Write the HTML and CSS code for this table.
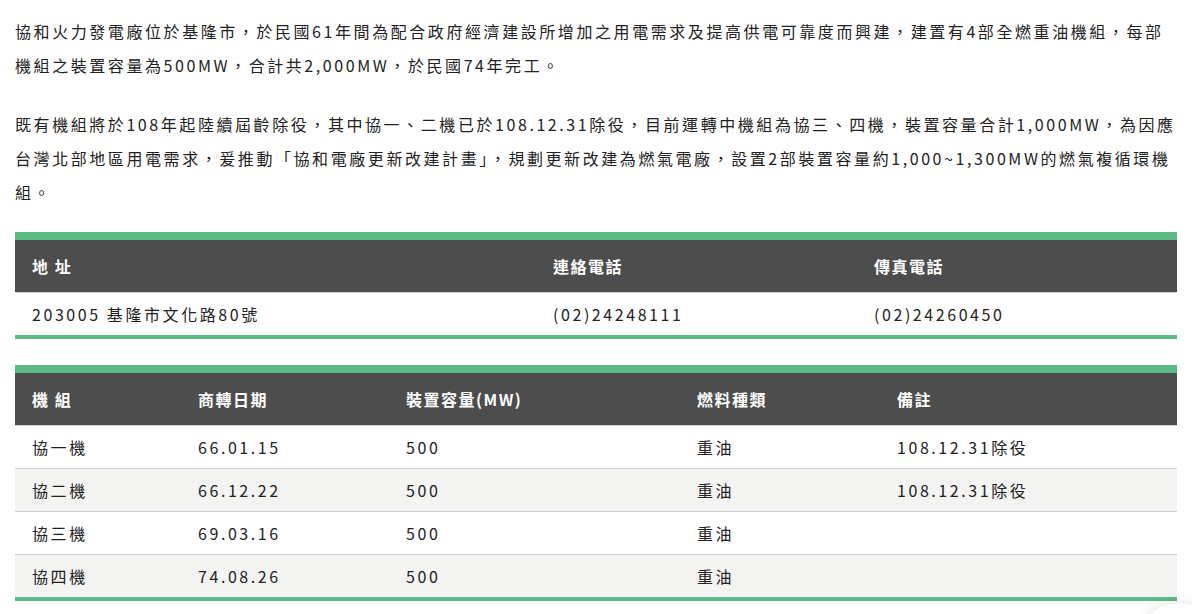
FILE: index.html
```html
<!DOCTYPE html>
<html lang="zh-Hant">
<head>
<meta charset="utf-8">
<title>協和火力發電廠</title>
<link rel="stylesheet" href="styles.css">
</head>
<body>
<main class="page">
  <p class="intro">協和火力發電廠位於基隆市，於民國61年間為配合政府經濟建設所增加之用電需求及提高供電可靠度而興建，建置有4部全燃重油機組，每部機組之裝置容量為500MW，合計共2,000MW，於民國74年完工。</p>
  <p class="intro">既有機組將於108年起陸續屆齡除役，其中協一、二機已於108.12.31除役，目前運轉中機組為協三、四機，裝置容量合計1,000MW，為因應台灣北部地區用電需求，爰推動「協和電廠更新改建計畫」，規劃更新改建為燃氣電廠，設置2部裝置容量約1,000~1,300MW的燃氣複循環機組。</p>

  <table class="info contact">
    <thead>
      <tr>
        <th class="c-addr">地 址</th>
        <th class="c-tel">連絡電話</th>
        <th class="c-fax">傳真電話</th>
      </tr>
    </thead>
    <tbody>
      <tr>
        <td>203005 基隆市文化路80號</td>
        <td>(02)24248111</td>
        <td>(02)24260450</td>
      </tr>
    </tbody>
  </table>

  <table class="info units">
    <thead>
      <tr>
        <th class="c-unit">機 組</th>
        <th class="c-date">商轉日期</th>
        <th class="c-cap">裝置容量(MW)</th>
        <th class="c-fuel">燃料種類</th>
        <th class="c-note">備註</th>
      </tr>
    </thead>
    <tbody>
      <tr><td>協一機</td><td>66.01.15</td><td>500</td><td>重油</td><td>108.12.31除役</td></tr>
      <tr><td>協二機</td><td>66.12.22</td><td>500</td><td>重油</td><td>108.12.31除役</td></tr>
      <tr><td>協三機</td><td>69.03.16</td><td>500</td><td>重油</td><td></td></tr>
      <tr><td>協四機</td><td>74.08.26</td><td>500</td><td>重油</td><td></td></tr>
    </tbody>
  </table>
</main>
<div class="float-btn" aria-hidden="true"></div>
</body>
</html>
```

FILE: styles.css
```css
* { box-sizing: border-box; }

html, body {
  margin: 0;
  padding: 0;
  background: #ffffff;
  overflow: hidden;
}

body {
  font-family: "Noto Sans CJK TC", "Noto Sans", sans-serif;
  font-size: 16px;
  color: #222222;
  letter-spacing: 2.57px;
}

.page {
  padding: 14px 15px 0 15px;
}

.intro {
  margin: 0 0 25px 0;
  line-height: 34px;
}

.intro + .intro {
  margin-bottom: 23px;
}

.info {
  width: 100%;
  border-collapse: separate;
  border-spacing: 0;
  table-layout: fixed;
  border-top: 8px solid #5dbb86;
  border-bottom: 4px solid #5dbb86;
  margin-bottom: 26px;
}

.info th {
  background: #4d4d4d;
  color: #ffffff;
  font-weight: 700;
  text-align: left;
  height: 52px;
  padding: 0 17px;
  letter-spacing: 1.5px;
}

.info td {
  height: 43px;
  padding: 0 17px;
  border-top: 1px solid #cfcfcf;
  text-align: left;
  vertical-align: middle;
}

.units tbody tr:nth-child(even) td {
  background: #f4f5f3;
}

.c-addr { width: 521px; }
.c-tel { width: 321px; }
.c-fax { width: 320px; }

.c-unit { width: 166px; }
.c-date { width: 208px; }
.c-cap { width: 291px; }
.c-fuel { width: 200px; }
.c-note { width: 297px; }

.float-btn {
  position: fixed;
  left: 1138px;
  top: 603px;
  width: 80px;
  height: 80px;
  border-radius: 50%;
  background: #ffffff;
  box-shadow: 0 0 14px rgba(0, 0, 0, 0.12);
}
```
